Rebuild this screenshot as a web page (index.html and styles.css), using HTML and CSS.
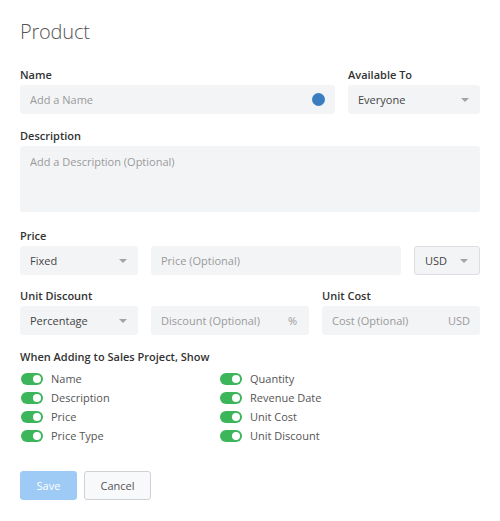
FILE: index.html
```html
<!DOCTYPE html>
<html lang="en">
<head>
<meta charset="utf-8">
<title>Product</title>
<link rel="stylesheet" href="styles.css">
</head>
<body>
<form class="page">
  <h1 class="title">Product</h1>

  <div class="row row-1">
    <div class="field f-name">
      <label class="label">Name</label>
      <div class="box">
        <input class="input" type="text" placeholder="Add a Name">
        <span class="dot"></span>
      </div>
    </div>
    <div class="field f-avail">
      <label class="label">Available To</label>
      <div class="box select"><span class="value">Everyone</span><span class="caret"></span></div>
    </div>
  </div>

  <div class="field row-2">
    <label class="label">Description</label>
    <textarea class="textarea" placeholder="Add a Description (Optional)"></textarea>
  </div>

  <div class="field row-3">
    <label class="label">Price</label>
    <div class="row">
      <div class="box select w-type"><span class="value">Fixed</span><span class="caret"></span></div>
      <div class="box w-price"><input class="input" type="text" placeholder="Price (Optional)"></div>
      <div class="box select bordered w-cur"><span class="value">USD</span><span class="caret"></span></div>
    </div>
  </div>

  <div class="row row-4">
    <div class="field f-discount">
      <label class="label">Unit Discount</label>
      <div class="row">
        <div class="box select w-type"><span class="value">Percentage</span><span class="caret"></span></div>
        <div class="box w-half"><input class="input" type="text" placeholder="Discount (Optional)"><span class="suffix pct">%</span></div>
      </div>
    </div>
    <div class="field w-half">
      <label class="label">Unit Cost</label>
      <div class="box"><input class="input" type="text" placeholder="Cost (Optional)"><span class="suffix">USD</span></div>
    </div>
  </div>

  <div class="show">
    <div class="label">When Adding to Sales Project, Show</div>
    <div class="toggles">
      <div class="toggle-item"><span class="toggle"></span>Name</div>
      <div class="toggle-item"><span class="toggle"></span>Quantity</div>
      <div class="toggle-item"><span class="toggle"></span>Description</div>
      <div class="toggle-item"><span class="toggle"></span>Revenue Date</div>
      <div class="toggle-item"><span class="toggle"></span>Price</div>
      <div class="toggle-item"><span class="toggle"></span>Unit Cost</div>
      <div class="toggle-item"><span class="toggle"></span>Price Type</div>
      <div class="toggle-item"><span class="toggle"></span>Unit Discount</div>
    </div>
  </div>

  <div class="actions">
    <button type="button" class="btn btn-save">Save</button>
    <button type="button" class="btn btn-cancel">Cancel</button>
  </div>
</form>
</body>
</html>
```
FILE: styles.css
```css
* { box-sizing: border-box; }
html, body { margin: 0; padding: 0; background: #fff; }
body {
  font-family: "Open Sans", "DejaVu Sans", sans-serif;
  color: #444;
  width: 500px;
}
.page {
  padding: 18px 20px 0 20px;
  width: 500px;
}
.title {
  margin: 0 0 21px 0;
  font-size: 20px;
  font-weight: 300;
  line-height: 28px;
  color: #555;
  letter-spacing: -0.2px;
}
.row {
  display: flex;
  gap: 13px;
}
.field { display: flex; flex-direction: column; }
.label {
  display: block;
  font-size: 11px;
  font-weight: 600;
  line-height: 15px;
  color: #333;
  margin-bottom: 3px;
}
.row-1 { margin-bottom: 14px; }
.f-name { width: 315px; }
.f-avail { width: 132px; }
.row-2 { margin-bottom: 16px; }
.row-3 { margin-bottom: 13px; }
.row-4 { margin-bottom: 14px; }
.f-discount { width: 289px; }

.box {
  position: relative;
  display: flex;
  align-items: center;
  height: 29px;
  background: #f3f4f6;
  border-radius: 3px;
  font-size: 11px;
  color: #444;
}
.w-type { width: 118px; }
.w-price { width: 250px; }
.w-cur { width: 66px; }
.w-half { width: 158px; }
.bordered { border: 1px solid #dcdee1; }
.bordered .value { padding-left: 9px; }

.input {
  flex: 1;
  min-width: 0;
  height: 100%;
  border: 0;
  outline: 0;
  background: transparent;
  padding: 0 10px;
  font-family: inherit;
  font-size: 11px;
  color: #444;
}
.input::placeholder, .textarea::placeholder { color: #9a9a9a; opacity: 1; }
.dot {
  width: 13px;
  height: 13px;
  border-radius: 50%;
  background: #3a7ebf;
  margin-right: 10px;
  flex: none;
}
.select .value { flex: 1; padding-left: 10px; }
.caret {
  width: 0;
  height: 0;
  border-left: 4px solid transparent;
  border-right: 4px solid transparent;
  border-top: 4px solid #a3a3a3;
  margin-right: 11px;
  flex: none;
}
.suffix { color: #9a9a9a; padding-right: 10px; flex: none; }
.suffix.pct { padding-right: 12px; }

.textarea {
  display: block;
  width: 460px;
  height: 66px;
  border: 0;
  outline: 0;
  border-radius: 3px;
  background: #f3f4f6;
  padding: 7px 10px;
  resize: none;
  font-family: inherit;
  font-size: 11px;
  line-height: 17px;
  color: #444;
}

.show .label { margin-bottom: 5px; }
.toggles {
  display: grid;
  grid-template-columns: 199px 1fr;
  grid-auto-rows: 19px;
}
.toggle-item {
  display: flex;
  align-items: center;
  font-size: 11px;
  color: #555;
}
.toggle {
  position: relative;
  width: 22px;
  height: 12px;
  border-radius: 6px;
  background: #3cb55b;
  margin-left: 1px;
  margin-right: 8px;
  flex: none;
}
.toggle::after {
  content: "";
  position: absolute;
  right: 2px;
  top: 2px;
  width: 8px;
  height: 8px;
  border-radius: 50%;
  background: #fff;
}

.actions {
  display: flex;
  gap: 7px;
  margin-top: 26px;
}
.btn {
  height: 29px;
  border-radius: 3px;
  font-family: inherit;
  font-size: 11px;
  padding: 0;
  cursor: pointer;
}
.btn-save {
  width: 57px;
  background: #9dcbf5;
  border: 1px solid #9dcbf5;
  color: #fff;
}
.btn-cancel {
  width: 67px;
  background: #f8f9fa;
  border: 1px solid #cfd1d4;
  color: #555;
}
```
